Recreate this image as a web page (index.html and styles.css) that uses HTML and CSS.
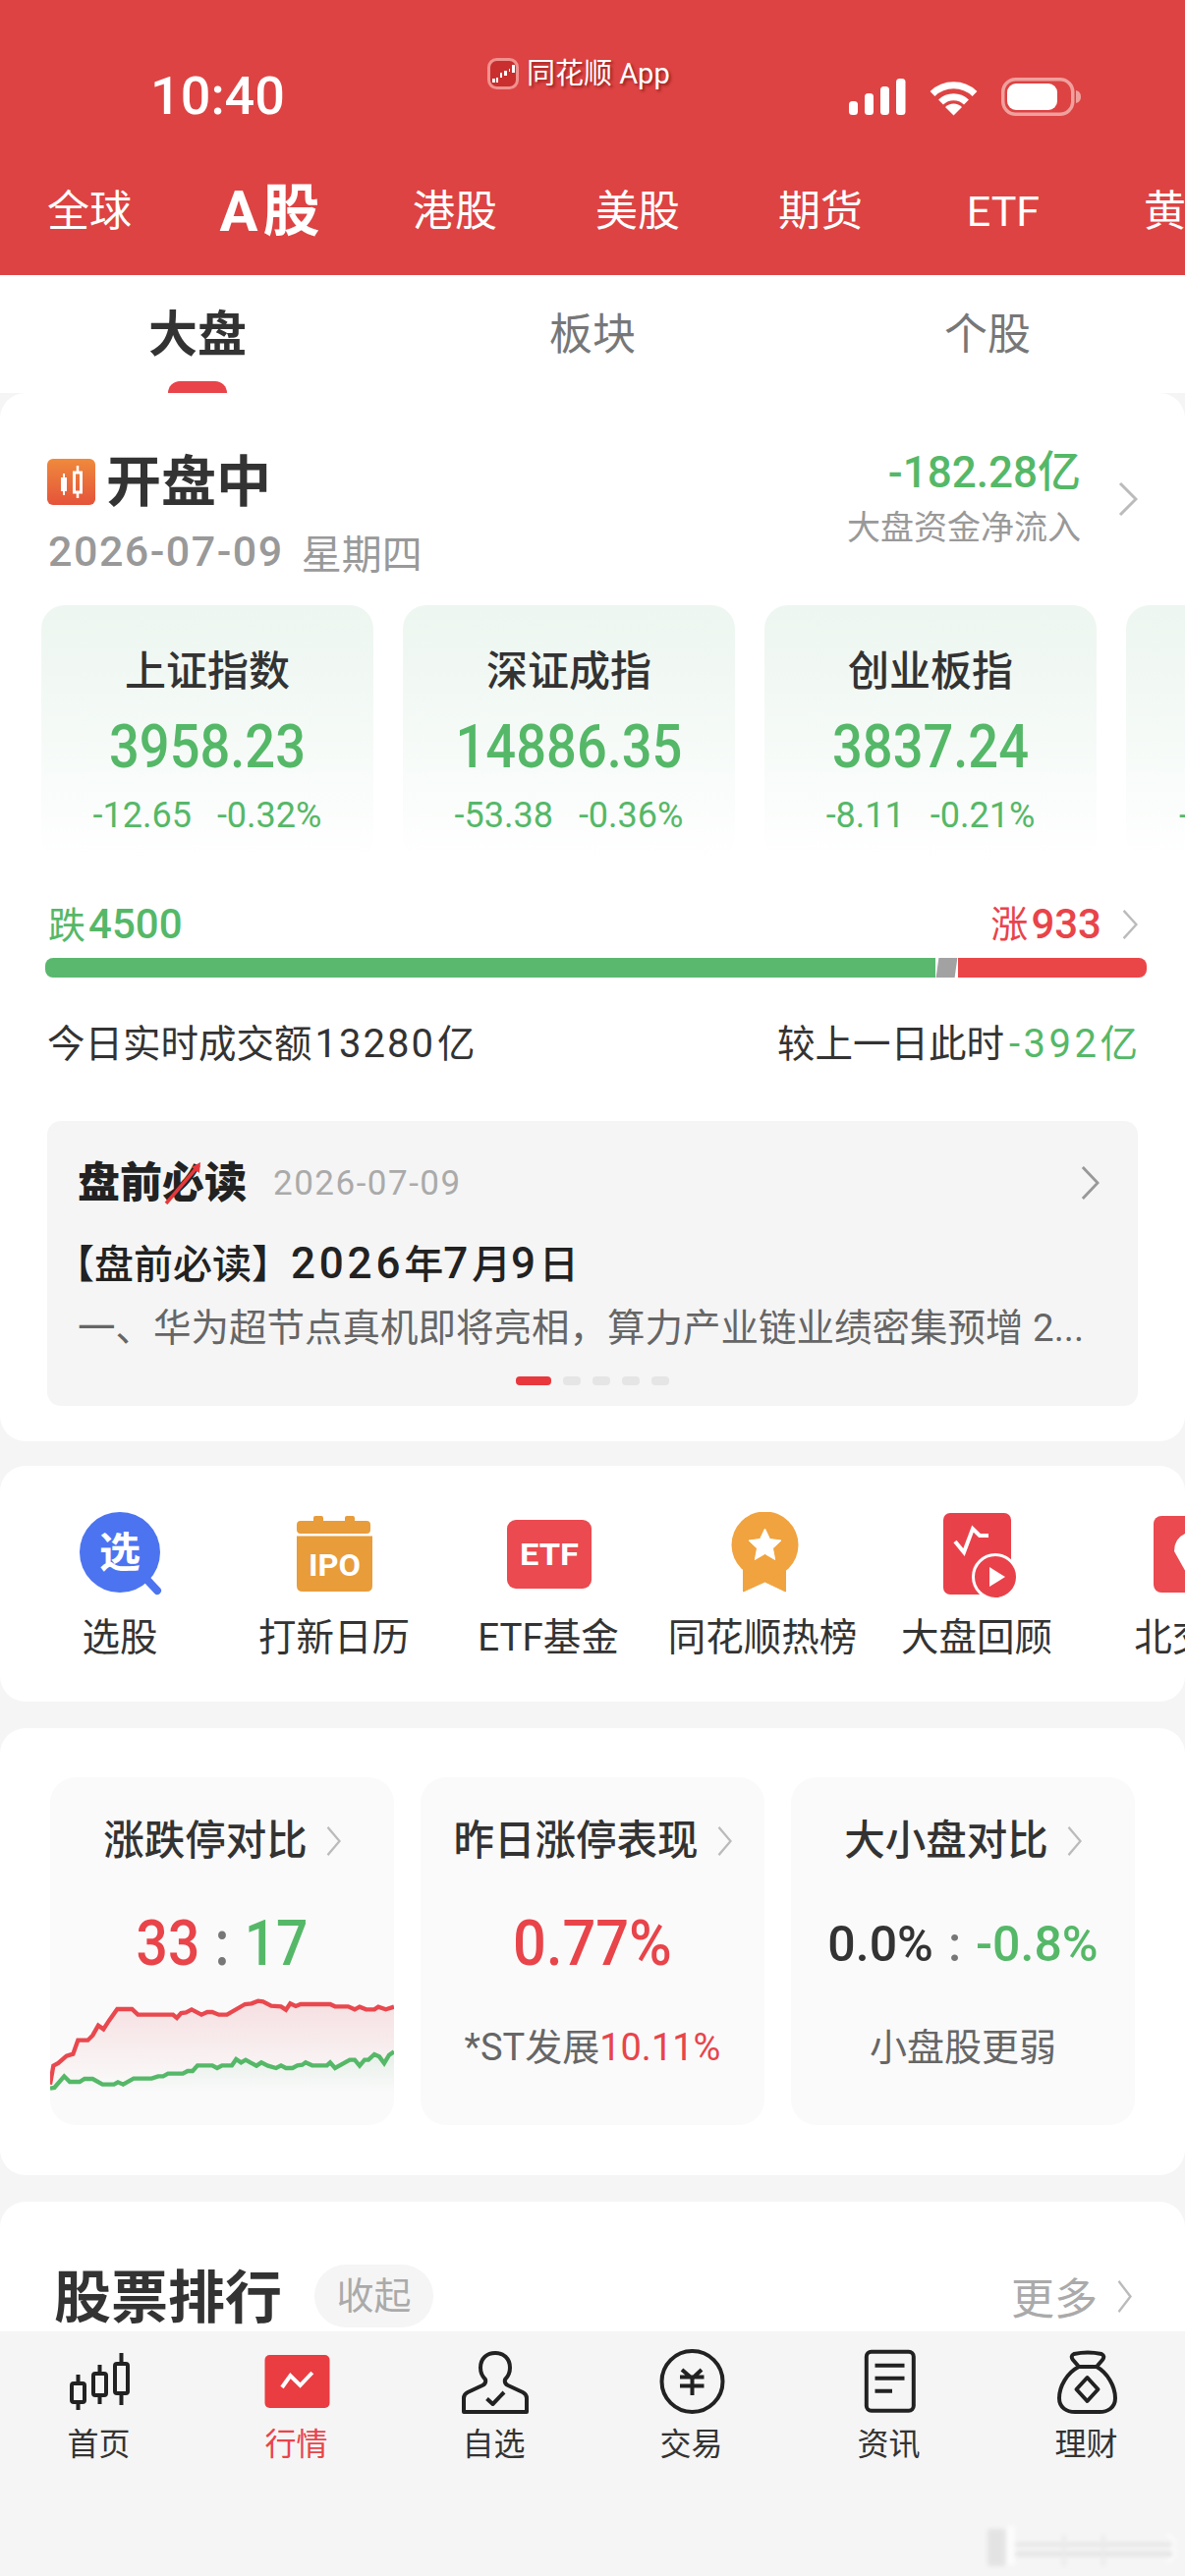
FILE: index.html
```html
<!DOCTYPE html>
<html lang="zh-CN">
<head>
<meta charset="utf-8">
<title>同花顺 行情</title>
<link rel="stylesheet" href="styles.css">
</head>
<body>
<svg class="defs" width="0" height="0" aria-hidden="true"><defs>
  <symbol id="chev" viewBox="0 0 20 36" preserveAspectRatio="none"><path d="M2 1 L18 18 L2 35" fill="none" stroke="currentColor" stroke-width="3"/></symbol>
  <linearGradient id="fillRed" x1="0" y1="0" x2="0" y2="1"><stop offset="0" stop-color="#f6dfe1"/><stop offset="1" stop-color="#fafafa"/></linearGradient>
  <linearGradient id="fillGreen" x1="0" y1="0" x2="0" y2="1"><stop offset="0" stop-color="#e6efe8"/><stop offset="1" stop-color="#fafafa"/></linearGradient>
</defs></svg>
<div class="screen">
<main class="content">
  <header class="header">
    <div class="status">
      <span class="time">10:40</span>
      <div class="app-tag">
        <svg class="app-logo" viewBox="0 0 32 32"><rect x="1.5" y="1.5" width="29" height="29" rx="8" fill="#c92f2f" stroke="#f0928f" stroke-width="3"/><path d="M5 21h3v4H5zM9 20h2v5H9zM13 15h2v5h-2zM17 13h3v5h-3zM22 11h1v3h-1zM25 7h3v8h-3z" fill="#fff"/></svg>
        <span class="app-name">同花顺 App</span>
      </div>
      <div class="sys-icons">
        <svg class="signal" viewBox="0 0 58 38"><rect x="0" y="23" width="9" height="14" rx="3.5" fill="#fff"/><rect x="16" y="15" width="9" height="22" rx="3.5" fill="#fff"/><rect x="32" y="8" width="9" height="29" rx="3.5" fill="#fff"/><rect x="48" y="0" width="9.5" height="37" rx="3.5" fill="#fff"/></svg>
        <svg class="wifi" viewBox="0 0 51 38"><path d="M4 15.5 A31 31 0 0 1 47 15.5" fill="none" stroke="#fff" stroke-width="7"/><path d="M12.5 24 A18.5 18.5 0 0 1 38.5 24" fill="none" stroke="#fff" stroke-width="7"/><path d="M25.5 37.5 L17 29 A12 12 0 0 1 34 29 Z" fill="#fff"/></svg>
        <svg class="battery" viewBox="0 0 81 39"><rect x="1.75" y="1.75" width="71" height="35.5" rx="13" fill="none" stroke="#f0a09d" stroke-width="3.5"/><rect x="6" y="6" width="51" height="27" rx="9" fill="#fff"/><path d="M76 13 C80 14 81 17 81 19.5 C81 22 80 25 76 26 Z" fill="#f0a09d"/></svg>
      </div>
    </div>
    <nav class="market-tabs">
      <span class="market-tab">全球</span>
      <span class="market-tab is-on">A股</span>
      <span class="market-tab">港股</span>
      <span class="market-tab">美股</span>
      <span class="market-tab">期货</span>
      <span class="market-tab">ETF</span>
      <span class="market-tab">黄金</span>
    </nav>
  </header>

  <nav class="sub-tabs">
    <span class="sub-tab is-on">大盘</span>
    <span class="sub-tab">板块</span>
    <span class="sub-tab">个股</span>
  </nav>

  <section class="card card-market">
    <div class="summary">
      <div class="summary-left">
        <div class="open-row">
          <svg class="open-icon" viewBox="0 0 49 47"><defs><linearGradient id="openG" x1="0" y1="0" x2="0" y2="1"><stop offset="0" stop-color="#ef8a3c"/><stop offset="1" stop-color="#e5533a"/></linearGradient></defs><rect width="49" height="47" rx="6" fill="url(#openG)"/><path d="M14 19h6v14h-6z" fill="#fff"/><path d="M17 15v22" stroke="#fff" stroke-width="2"/><rect x="27.500" y="14" width="7" height="20" fill="none" stroke="#fff" stroke-width="3"/><path d="M31 7v7M31 34v6" stroke="#fff" stroke-width="2.500"/></svg>
          <span class="open-text">开盘中</span>
        </div>
        <div class="date-row"><span class="date-num">2026-07-09</span><span class="date-week">星期四</span></div>
      </div>
      <div class="summary-right">
        <div class="flow-text">
          <div class="flow-num">-182.28亿</div>
          <div class="flow-label">大盘资金净流入</div>
        </div>
        <svg class="chev chev-flow"><use href="#chev"/></svg>
      </div>
    </div>

    <div class="index-row">
      <div class="index-card">
        <div class="index-name">上证指数</div>
        <div class="index-value">3958.23</div>
        <div class="index-sub"><span>-12.65</span><span>-0.32%</span></div>
      </div>
      <div class="index-card">
        <div class="index-name">深证成指</div>
        <div class="index-value">14886.35</div>
        <div class="index-sub"><span>-53.38</span><span>-0.36%</span></div>
      </div>
      <div class="index-card">
        <div class="index-name">创业板指</div>
        <div class="index-value">3837.24</div>
        <div class="index-sub"><span>-8.11</span><span>-0.21%</span></div>
      </div>
      <div class="index-card index-card-cut">
        <div class="index-sub index-sub-cut"><span>-</span></div>
      </div>
    </div>

    <div class="breadth-labels">
      <span class="breadth-down"><span class="breadth-cn">跌</span>4500</span>
      <span class="breadth-up"><span class="breadth-cn">涨</span>933<svg class="chev chev-breadth"><use href="#chev"/></svg></span>
    </div>
    <div class="breadth-bar">
      <span class="bar-down"></span>
      <span class="bar-flat"></span>
      <span class="bar-up"></span>
    </div>

    <div class="turnover">
      <span>今日实时成交额<span class="turnover-num">13280</span>亿</span>
      <span>较上一日此时<span class="turnover-delta">-392</span><span class="turnover-unit">亿</span></span>
    </div>

    <div class="news">
      <div class="news-head">
        <span class="news-logo">盘前必读<svg class="news-slash" viewBox="0 0 40 44"><path d="M2 43 L32 8" stroke="#e5383d" stroke-width="3.5"/><path d="M28 6 L37 1 L36 12 Z" fill="#e5383d"/></svg></span>
        <span class="news-date">2026-07-09</span>
        <svg class="chev chev-news"><use href="#chev"/></svg>
      </div>
      <div class="news-title">【盘前必读】<span class="news-digits">2026</span>年<span class="news-digits">7</span>月<span class="news-digits">9</span>日</div>
      <div class="news-desc">一、华为超节点真机即将亮相，算力产业链业绩密集预增 2...</div>
      <div class="dots"><span class="dot dot-on"></span><span class="dot"></span><span class="dot"></span><span class="dot"></span><span class="dot"></span></div>
    </div>
  </section>

  <section class="card card-shortcuts">
    <div class="shortcut">
      <svg class="shortcut-icon" viewBox="0 0 100 88"><circle cx="50" cy="41" r="41" fill="#4c74f0"/><path d="M74 65 L88 80" stroke="#4c74f0" stroke-width="8" stroke-linecap="round"/><text x="50" y="56" class="glyph-xuan">选</text></svg>
      <span class="shortcut-label">选股</span>
    </div>
    <div class="shortcut">
      <svg class="shortcut-icon" viewBox="0 0 100 88"><path d="M29 9V6q0-2 2-2h6q2 0 2 2v3h22V6q0-2 2-2h6q2 0 2 2v3h12q4 0 4 4v5q0 4-4 4H16q-4 0-4-4v-5q0-4 4-4z" fill="#e89c3a"/><path d="M12 24.500H89V75q0 6-6 6H18q-6 0-6-6z" fill="#e89c3a"/><text x="50.500" y="65" class="glyph-ipo" textLength="53" lengthAdjust="spacingAndGlyphs">IPO</text></svg>
      <span class="shortcut-label">打新日历</span>
    </div>
    <div class="shortcut">
      <svg class="shortcut-icon" viewBox="0 0 100 88"><rect x="8" y="8" width="86" height="70" rx="9" fill="#ea4a50"/><text x="51" y="54" class="glyph-etf" textLength="60" lengthAdjust="spacingAndGlyphs">ETF</text></svg>
      <span class="shortcut-label">ETF基金</span>
    </div>
    <div class="shortcut">
      <svg class="shortcut-icon" viewBox="0 0 100 88"><g transform="translate(2.500 0)"><path d="M28 50H71V81L50 71 28 81Z" fill="#f0a33e" stroke="#f0a33e" stroke-width="1" stroke-linejoin="round"/><circle cx="50" cy="33.500" r="34" fill="#f0a33e"/><path d="M50 17l5 10.500 11.500 1.500-8.500 8 2.200 11.500L50 42.500 39.800 48.500 42 37l-8.500-8L45 27.500Z" fill="#fff" stroke="#fff" stroke-width="1" stroke-linejoin="round"/></g></svg>
      <span class="shortcut-label">同花顺热榜</span>
    </div>
    <div class="shortcut">
      <svg class="shortcut-icon" viewBox="0 0 100 88"><g transform="translate(3 0)"><rect x="13" y="1" width="69" height="83" rx="7" fill="#e9414a"/><path d="M25 30 L34 41 L43 17 L50 24 H59" fill="none" stroke="#fff" stroke-width="4"/><circle cx="66" cy="66" r="22.500" fill="#e9414a" stroke="#fff" stroke-width="3"/><path d="M60 56 L76 66 L60 76 Z" fill="#fff"/></g></svg>
      <span class="shortcut-label">大盘回顾</span>
    </div>
    <div class="shortcut">
      <svg class="shortcut-icon" viewBox="0 0 100 88"><rect x="12" y="4" width="100" height="78" rx="8" fill="#ea4a50"/><path d="M33 40 Q33 24 50 20 L70 22 V60 L50 70 Z" fill="#fff"/></svg>
      <span class="shortcut-label">北交所</span>
    </div>
  </section>

  <section class="card card-compare">
    <div class="tile">
      <div class="tile-title">涨跌停对比<svg class="chev chev-tile"><use href="#chev"/></svg></div>
      <div class="tile-num tile-ratio"><span class="tx-red">33</span><span class="tile-colon">:</span><span class="tx-green">17</span></div>
      <svg class="tile-chart" viewBox="35 150 1050 300" preserveAspectRatio="none">
        <path fill="url(#fillRed)" d="M35 425L45 368L60 360L85 338L105 332L120 290L150 290L165 275L182 245L198 256L215 230L240 195L285 195L303 212L410 212L422 222L435 207L450 205L467 196L497 212L515 204L530 204L550 212L575 212L630 180L650 178L670 170L685 172L710 185L740 187L755 197L768 178L785 186L800 180L890 180L905 187L945 187L965 196L980 188L1000 196L1025 196L1037 188L1060 196L1085 188V330L1070 335L1055 360L1040 340L1025 333L1007 350L995 350L980 368L965 350L950 350L905 375L890 358L880 367L835 367L815 358L805 365L790 367L775 375L755 375L740 367L725 375L700 368L680 358L665 368L632 350L618 358L603 348L590 367L560 367L545 375L530 367L485 367L470 384L455 384L440 392L395 392L380 400L365 400L345 407L290 407L258 425L242 418L230 425L195 425L165 408L140 408L125 417L95 417L78 400L48 435L35 437Z"/>
        <path fill="url(#fillGreen)" d="M35 437L48 435L78 400L95 417L125 417L140 408L165 408L195 425L230 425L242 418L258 425L290 407L345 407L365 400L380 400L395 392L440 392L455 384L470 384L485 367L530 367L545 375L560 367L590 367L603 348L618 358L632 350L665 368L680 358L700 368L725 375L740 367L755 375L775 375L790 367L805 365L815 358L835 367L880 367L890 358L905 375L950 350L965 350L980 368L995 350L1007 350L1025 333L1040 340L1055 360L1070 335L1085 325V450H35Z"/>
        <polyline class="line-red" points="35,425 45,368 60,360 85,338 105,332 120,290 150,290 165,275 182,245 198,256 215,230 240,195 285,195 303,212 410,212 422,222 435,207 450,205 467,196 497,212 515,204 530,204 550,212 575,212 630,180 650,178 670,170 685,172 710,185 740,187 755,197 768,178 785,186 800,180 890,180 905,187 945,187 965,196 980,188 1000,196 1025,196 1037,188 1060,196 1085,188"/>
        <polyline class="line-green" points="35,437 48,435 78,400 95,417 125,417 140,408 165,408 195,425 230,425 242,418 258,425 290,407 345,407 365,400 380,400 395,392 440,392 455,384 470,384 485,367 530,367 545,375 560,367 590,367 603,348 618,358 632,350 665,368 680,358 700,368 725,375 740,367 755,375 775,375 790,367 805,365 815,358 835,367 880,367 890,358 905,375 950,350 965,350 980,368 995,350 1007,350 1025,333 1040,340 1055,360 1070,335 1085,325"/>
      </svg>
    </div>
    <div class="tile">
      <div class="tile-title">昨日涨停表现<svg class="chev chev-tile"><use href="#chev"/></svg></div>
      <div class="tile-num tile-pct tx-red">0.77%</div>
      <div class="tile-sub">*ST发展<span class="tx-red">10.11%</span></div>
    </div>
    <div class="tile">
      <div class="tile-title">大小盘对比<svg class="chev chev-tile"><use href="#chev"/></svg></div>
      <div class="tile-num tile-num-small"><span>0.0%</span><span class="tile-colon">:</span><span class="tx-green">-0.8%</span></div>
      <div class="tile-sub">小盘股更弱</div>
    </div>
  </section>

  <section class="card card-rank">
    <div class="rank-head">
      <span class="rank-title">股票排行</span>
      <span class="rank-chip">收起</span>
      <span class="rank-more">更多<svg class="chev chev-more"><use href="#chev"/></svg></span>
    </div>
  </section>
</main>

<footer class="tabbar">
  <div class="tabbar-item">
    <svg class="tabbar-icon" viewBox="0 0 80 68"><g class="stroke-dark"><path d="M18.500 26V35M18.500 54V62M40.500 16V25M40.500 47V56M62.500 4V15M62.500 45V57"/><rect x="12" y="35" width="13" height="19" rx="2"/><rect x="34" y="25" width="13" height="22" rx="2"/><rect x="56" y="15" width="13" height="30" rx="2"/></g></svg>
    <span class="tabbar-label">首页</span>
  </div>
  <div class="tabbar-item is-on">
    <svg class="tabbar-icon" viewBox="0 0 80 68"><rect x="7.500" y="6" width="66" height="54" rx="5" fill="#e93d42"/><path d="M25 39 L33.500 27 L43.500 37 L55.800 24" fill="none" stroke="#fff" stroke-width="4"/></svg>
    <span class="tabbar-label">行情</span>
  </div>
  <div class="tabbar-item">
    <svg class="tabbar-icon" viewBox="0 0 80 68"><g class="stroke-dark"><path d="M9 64V50Q9 46 13 44L28 37Q32 35 31 31Q26 26 26 19C26 9 33 4 41 4C49 4 56 9 56 19Q56 26 51 31Q50 35 54 37L69 44Q73 46 73 50V64Z"/><path d="M32.500 50.500L38.500 56L50 44"/></g></svg>
    <span class="tabbar-label">自选</span>
  </div>
  <div class="tabbar-item">
    <svg class="tabbar-icon" viewBox="0 0 80 68"><g class="stroke-dark"><circle cx="40.500" cy="33" r="31"/><path d="M30 21L40.500 30L50 21M28 28.500H52.500M28 37.500H52.500M40.500 30V47"/></g></svg>
    <span class="tabbar-label">交易</span>
  </div>
  <div class="tabbar-item">
    <svg class="tabbar-icon" viewBox="0 0 80 68"><g class="stroke-dark"><rect x="16.800" y="2.700" width="48" height="60" rx="5"/><path d="M25.500 16.700H55.500M25.500 29.700H55.500M25.500 42.700H43"/></g></svg>
    <span class="tabbar-label">资讯</span>
  </div>
  <div class="tabbar-item">
    <svg class="tabbar-icon" viewBox="0 0 80 68"><g class="stroke-dark"><path d="M27 5Q41 2 55 5Q59 7 56 11L50 18H32L26 11Q23 7 27 5Z"/><path d="M32 18C20 24 12 38 12 50C12 60 20 64 28 64H53C61 64 69 60 69 50C69 38 61 24 50 18"/><path d="M40.500 29L51.500 41L40.500 53L29.500 41Z"/></g></svg>
    <span class="tabbar-label">理财</span>
  </div>
</footer>
<svg class="watermark" viewBox="0 0 200 50" aria-hidden="true">
  <rect x="2" y="6" width="18" height="38" fill="#dcdcdc"/>
  <rect x="22" y="3" width="8" height="40" fill="#ffffff"/>
  <rect x="30" y="20" width="160" height="4" fill="#dedede"/>
  <rect x="30" y="29" width="160" height="5" fill="#dddddd"/>
  <rect x="78" y="12" width="4" height="32" fill="#e6e6e6"/>
  <rect x="118" y="12" width="4" height="32" fill="#e6e6e6"/>
  <path d="M184 12Q196 16 190 25Q198 34 184 40" fill="none" stroke="#fff" stroke-width="3"/>
</svg>
</div>
</body>
</html>
```

FILE: styles.css
```css
* { box-sizing: border-box; }
html, body { margin: 0; padding: 0; }
body {
  width: 1206px;
  height: 2622px;
  overflow: hidden;
  background: #f5f5f5;
  color: #333;
  font-family: Roboto, "Noto Sans CJK SC", sans-serif;
}
.defs { position: absolute; }
.screen { position: relative; display: flex; flex-direction: column; height: 2622px; }
.content { height: 2373px; overflow: hidden; flex: none; }
.tx-red { color: #e8444a; }
.tx-green { color: #55b868; }
.chev { display: block; color: #bbb; flex: none; }

/* header */
.header { height: 280px; background: #dd4343; color: #fff; overflow: hidden; }
.status { display: flex; height: 155px; align-items: flex-start; }
.time { margin: 68px 0 0 153px; font-size: 54px; line-height: 60px; font-weight: 500; width: 135px; white-space: nowrap; }
.app-tag { display: flex; align-items: center; margin: 58px 0 0 208px; gap: 8px; }
.app-logo { width: 32px; height: 32px; }
.app-name { font-size: 29px; line-height: 34px; text-shadow: 2px 2px 3px rgba(90, 0, 0, .55); }
.sys-icons { display: flex; margin: 79px 0 0 auto; padding-right: 106px; align-items: center; }
.signal { width: 58px; height: 38px; }
.wifi { width: 51px; height: 38px; margin-left: 23px; }
.battery { width: 81px; height: 39px; margin-left: 23px; }
.market-tabs { display: flex; height: 120px; align-items: center; margin-left: -2px; }
.market-tab { flex: none; width: 186px; text-align: center; font-size: 43px; line-height: 60px; }
.market-tab.is-on { font-size: 58px; font-weight: 700; letter-spacing: 5px; }

/* sub tabs */
.sub-tabs { display: grid; grid-template-columns: repeat(3, 402px); height: 120px; padding-top: 2px; background: #fff; }
.sub-tab { position: relative; text-align: center; font-size: 44px; line-height: 118px; color: #777; }
.sub-tab.is-on { font-size: 50px; font-weight: 700; color: #333; }
.sub-tab.is-on::after {
  content: "";
  position: absolute;
  left: 171px;
  top: 106px;
  width: 60px;
  height: 24px;
  border-radius: 12px;
  background: #e8444a;
}

/* cards */
.card { position: relative; background: #fff; border-radius: 26px; }
.card-market { height: 1067px; padding-top: 50px; }
.summary { display: flex; justify-content: space-between; height: 142px; padding: 0 48px; }
.open-row { display: flex; align-items: center; height: 80px; }
.open-icon { width: 49px; height: 47px; }
.open-text { margin: 2px 0 0 11px; font-size: 56px; line-height: 78px; font-weight: 700; }
.date-row { display: flex; align-items: center; height: 62px; padding-left: 1px; color: #999; }
.date-num { font-size: 43px; font-weight: 500; letter-spacing: 1.500px; }
.date-week { margin-left: 18px; font-size: 41px; }
.summary-right { display: flex; align-items: center; height: 116px; }
.flow-text { text-align: right; margin-right: 38px; }
.flow-num { margin-top: -2px; font-size: 44px; line-height: 60px; font-weight: 500; color: #55b868; }
.flow-label { font-size: 34px; line-height: 52px; color: #999; }
.chev-flow { width: 20px; height: 34px; }

.index-row { display: flex; gap: 30px; margin-top: 24px; padding-left: 42px; overflow: hidden; }
.index-card {
  flex: none;
  width: 338px;
  height: 261px;
  padding-top: 46px;
  border-radius: 24px;
  text-align: center;
  background: linear-gradient(180deg, #edf6f0 0%, #f5faf7 50%, #ffffff 100%);
}
.index-name { font-size: 42px; line-height: 44px; font-weight: 500; }
.index-value { margin-top: 20px; font-size: 62px; line-height: 68px; font-weight: 500; color: #55b868; transform: scaleX(.875); }
.index-sub { display: flex; justify-content: center; gap: 26px; margin-top: 16px; font-size: 36px; line-height: 40px; color: #55b868; }
.index-card-cut { padding-top: 194px; }
.index-sub-cut { justify-content: flex-start; margin-top: 0; padding-left: 54px; }

.breadth-labels { display: flex; justify-content: space-between; height: 40px; margin-top: 44px; padding: 0 48px 0 49px; font-size: 42px; line-height: 40px; font-weight: 500; }
.breadth-down { color: #55b868; }
.breadth-up { display: flex; align-items: center; color: #e8444a; }
.breadth-cn { margin-right: 3px; font-size: 38px; font-weight: 400; }
.chev-breadth { width: 16px; height: 30px; margin-left: 21px; }
.breadth-bar { display: flex; gap: 2px; height: 20px; margin: 14px 39px 0 46px; }
.bar-down { width: 906px; background: #5ab86e; border-radius: 8px 0 0 8px; }
.bar-flat { width: 19px; background: #a2a2a2; transform: skewX(-8deg); }
.bar-up { flex: 1; background: #ea4648; border-radius: 0 8px 8px 0; }
.turnover { display: flex; justify-content: space-between; height: 40px; margin-top: 48px; padding: 0 48px 0 48px; font-size: 38.500px; line-height: 40px; }
.turnover-num { font-size: 40px; letter-spacing: 2px; margin: 0 2px 0 3px; }
.turnover-delta { margin-left: 5px; font-size: 40px; letter-spacing: 3.500px; color: #55b868; }
.turnover-unit { color: #55b868; }

.news { height: 290px; margin: 58px 48px 0; padding: 41px 0 0 31px; border-radius: 14px; background: #f5f5f5; }
.news-head { display: flex; align-items: center; height: 44px; }
.news-logo { position: relative; font-size: 43px; line-height: 44px; font-weight: 900; color: #222; }
.news-slash { position: absolute; left: 88px; top: 0; width: 40px; height: 44px; }
.news-date { margin-left: 27px; font-size: 35px; letter-spacing: 1.500px; color: #aaa; }
.chev-news { width: 19px; height: 34px; margin-left: auto; margin-right: 39px; color: #999; }
.news-title { margin: 38px 0 0 -23px; font-size: 40px; line-height: 44px; font-weight: 500; color: #222; white-space: nowrap; }
.news-digits { font-size: 44px; letter-spacing: 3.800px; }
.news-desc { margin-top: 20px; font-size: 38.500px; line-height: 44px; color: #666; white-space: nowrap; }
.dots { display: flex; justify-content: center; gap: 12px; margin: 27px 0 0 -31px; }
.dot { width: 18px; height: 9px; border-radius: 4px; background: #e5e5e5; }
.dot-on { width: 36px; background: #e8383d; }

.card-shortcuts { display: flex; height: 240px; margin-top: 25px; padding: 47px 0 0 13px; overflow: hidden; }
.shortcut { flex: none; width: 218px; display: flex; flex-direction: column; align-items: center; }
.shortcut-icon { width: 100px; height: 88px; flex: none; }
.shortcut-label { margin-top: 18px; font-size: 38.500px; line-height: 44px; color: #333; white-space: nowrap; }
.glyph-xuan { font-size: 42px; font-weight: 700; fill: #fff; text-anchor: middle; }
.glyph-ipo { font-size: 32px; font-weight: 700; fill: #fff; text-anchor: middle; }
.glyph-etf { font-size: 32px; font-weight: 700; fill: #fff; text-anchor: middle; }

.card-compare { display: flex; gap: 27px; height: 455px; margin-top: 27px; padding: 50px 0 0 51px; }
.tile { width: 350px; height: 354px; padding-top: 43px; border-radius: 26px; background: #fafafa; overflow: hidden; text-align: center; }
.tile-title { display: flex; justify-content: center; align-items: center; gap: 19px; font-size: 41.500px; line-height: 44px; font-weight: 500; color: #333; }
.chev-tile { width: 15px; height: 30px; }
.tile-num { margin-top: 48px; font-size: 64px; line-height: 70px; font-weight: 500; color: #e8444a; }
.tile-ratio { display: flex; justify-content: center; gap: 17px; transform: scaleX(.89); }
.tile-pct { transform: scaleX(.93); }
.tile-colon { color: #777; }
.tile-num-small { display: flex; justify-content: center; gap: 15px; font-size: 50px; color: #333; }
.tile-chart { display: block; width: 350px; height: 100px; margin-top: 16px; }
.line-red, .line-green { fill: none; stroke-width: 13; }
.line-red { stroke: #e8484e; }
.line-green { stroke: #55b868; }
.tile-sub { margin-top: 48px; font-size: 38px; line-height: 44px; color: #666; white-space: nowrap; }

.card-rank { height: 400px; margin-top: 27px; padding-top: 64px; }
.rank-head { display: flex; align-items: center; height: 64px; padding: 0 54px 0 55px; }
.rank-title { margin-top: 4px; font-size: 58px; line-height: 64px; font-weight: 700; }
.rank-chip { width: 121px; height: 64px; margin-left: 33px; border-radius: 32px; background: #f5f5f5; text-align: center; font-size: 38px; line-height: 64px; color: #aaa; }
.rank-more { display: flex; align-items: center; margin-left: auto; font-size: 44px; color: #aaa; }
.chev-more { width: 15px; height: 33px; margin-left: 20px; }

/* bottom bar */
.tabbar { display: grid; grid-template-columns: repeat(6, 201px); flex: 1; padding-top: 18px; background: #f5f5f5; align-content: start; }
.tabbar-item { display: flex; flex-direction: column; align-items: center; }
.tabbar-icon { width: 80px; height: 68px; }
.tabbar-label { margin-top: 9px; font-size: 32px; line-height: 40px; color: #333; }
.tabbar-item.is-on .tabbar-label { color: #e8444a; }
.stroke-dark { fill: none; stroke: #222; stroke-width: 4; stroke-linejoin: round; }
.watermark { position: absolute; left: 1003px; top: 2568px; width: 200px; height: 50px; filter: blur(2px); opacity: .7; }
```
